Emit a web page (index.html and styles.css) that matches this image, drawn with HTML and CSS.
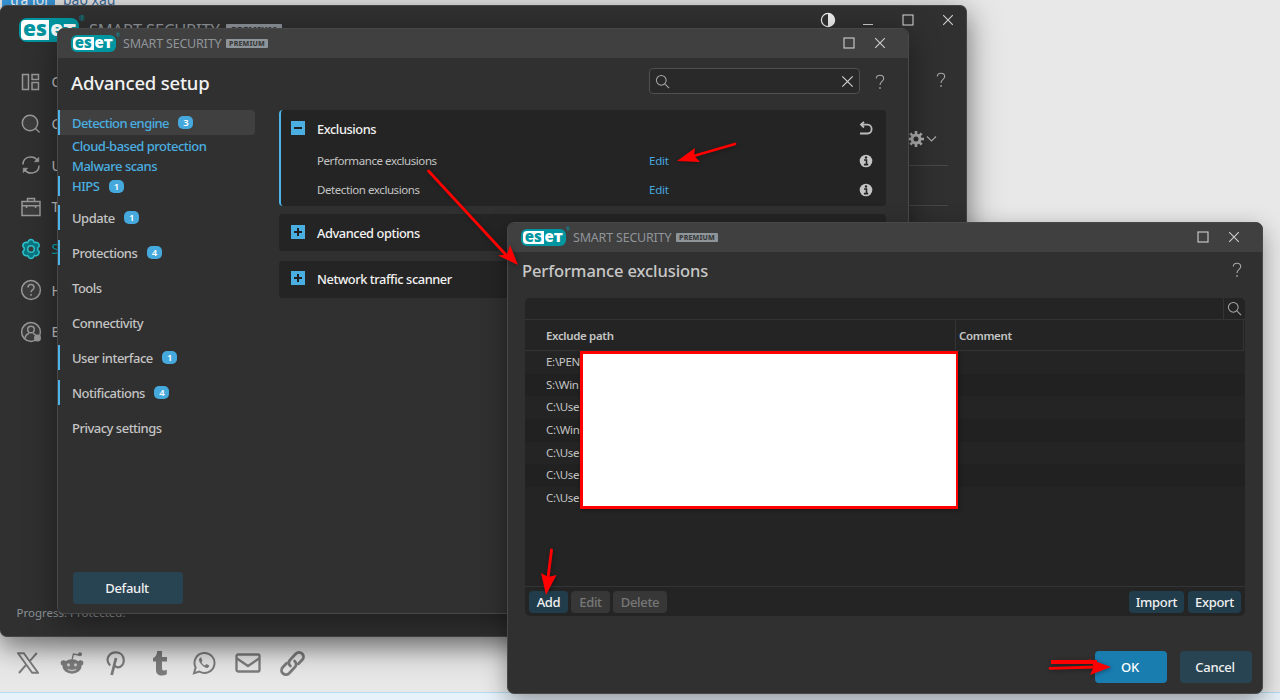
FILE: index.html
```html
<!DOCTYPE html>
<html lang="en">
<head>
<meta charset="utf-8">
<title>ESET Smart Security Premium</title>
<link rel="stylesheet" href="styles.css">
</head>
<body>
<svg class="defs" width="0" height="0">
  <symbol id="search" viewBox="0 0 16 16"><circle cx="6.7" cy="6.7" r="5.2"/><path d="M10.5 10.5 15 15"/></symbol>
  <symbol id="close" viewBox="0 0 12 12"><path d="M1.2 1.2 10.8 10.8M10.8 1.2 1.2 10.8"/></symbol>
  <symbol id="max" viewBox="0 0 12 12"><rect x="1" y="1" width="10" height="10"/></symbol>
  <symbol id="help" viewBox="0 0 10 16"><path d="M1.3 4.6C1.3 2.4 2.8 1.2 5 1.2s3.7 1.3 3.7 3.3C8.700 7.400 5 7.300 5 11"/><path d="M5 13.300v1.500" stroke-width="1.600"/></symbol>
  <symbol id="info" viewBox="0 0 14 14"><circle cx="7" cy="7" r="6.300" fill="#c4c4c4" stroke="none"/><path d="M5 6h2.500v4.500M4.900 10.600h4.300" stroke="#242424" stroke-width="1.600"/><circle cx="7" cy="3.500" r="1.200" fill="#242424" stroke="none"/></symbol>
</svg>

<div class="desktop">
  <div class="page-title"><span class="mark">tra lời</span><span class="link">báo xấu</span></div>
  <div class="share">
    <svg width="22" height="22" viewBox="0 0 22 22" fill="none" stroke="#7c7c7c"><path d="M1 1.200h5.800L21 20.800h-5.800z" stroke-width="1.900"/><path d="M19.800 1 12.500 9.300M9.300 12.700 2 21" stroke-width="2"/></svg>
    <svg width="24" height="24" viewBox="0 0 24 24" fill="#7c7c7c"><circle cx="3.500" cy="12" r="2.800"/><circle cx="20.500" cy="12" r="2.800"/><ellipse cx="12" cy="15.500" rx="9.500" ry="7.200"/><circle cx="20" cy="3.200" r="2"/><path d="M12 9l1.400-6 5.600 1" fill="none" stroke="#7c7c7c" stroke-width="1.300"/><circle cx="8.500" cy="13.800" r="1.600" fill="#ccc"/><circle cx="15.500" cy="13.800" r="1.600" fill="#ccc"/><path d="M8 18.200q4 2.600 8 0" fill="none" stroke="#ccc" stroke-width="1.300"/></svg>
    <svg width="20" height="25" viewBox="0 0 20 25" fill="none" stroke="#7c7c7c" stroke-width="2.200"><path d="M4.200 14.500C-1 9.500 2 1.300 10.300 1.300c9.500 0 9.800 15 1.600 15-2.400 0-3.200-1.800-3.200-1.800"/><path d="M10 7 5.700 24" stroke-width="2.800"/></svg>
    <svg width="16" height="26" viewBox="0 0 16 26" fill="#7c7c7c"><path d="M5.200 1H10v6h5v4.500h-5v6.700c0 3 2.500 2.700 4.800 1.500v4.600C9.500 27 4 25.500 4 20v-8.500H1V8c3-1.200 4-3.500 4.200-7z"/></svg>
    <svg width="24" height="24" viewBox="0 0 24 24" fill="none" stroke="#7c7c7c" stroke-width="2"><path d="M2 22.200 3.600 16.500A10 10 0 1 1 7.300 20.500z"/><path d="M8.500 6.500 7 8c-.8 3 5 9.200 8.500 9l1.700-1.600-.3-1.100-2.600-1.200-1.400 1.500c-1.500-.6-2.700-1.700-3.500-3.300l1.100-1.300L9.300 6.600z" fill="#7c7c7c" stroke="none"/></svg>
    <svg width="26" height="20" viewBox="0 0 26 20" fill="none" stroke="#7c7c7c" stroke-width="2.300" stroke-linejoin="round"><rect x="1.500" y="1.500" width="23" height="17" rx="1.500"/><path d="M2 5.500 13 13l11-7.500"/></svg>
    <svg width="27" height="27" viewBox="0 0 26 26" fill="none" stroke="#7c7c7c" stroke-width="2.700" stroke-linecap="round"><path d="M11 15.500c-2.400-2.400-1.800-4.500 0-6.300l5.200-5.500c4-4 10 1.500 6.200 5.700l-3.700 3.800"/><path d="M15 10.500c2.400 2.400 1.800 4.500 0 6.300l-5.200 5.500c-4 4-10-1.500-6.200-5.700l3.700-3.800"/></svg>
  </div>
  <div class="taskbar"></div>

  <section class="window main">
    <header class="main-bar">
      <div class="brand big"><span class="logo"><b>es</b><i>eт</i></span><sup>®</sup><span class="product">SMART SECURITY</span><span class="premium">PREMIUM</span></div>
      <div class="main-ctl">
        <svg width="16" height="16" viewBox="0 0 16 16"><circle cx="8" cy="8" r="6.600" fill="none" stroke="#eee" stroke-width="1.200"/><path d="M8 1.400a6.600 6.600 0 0 1 0 13.200z" fill="#eee"/></svg>
        <svg class="ico" width="12" height="12" viewBox="0 0 12 12"><path d="M1 10.500h10"/></svg>
        <svg class="ico" width="12" height="12"><use href="#max"/></svg>
        <svg class="ico" width="12" height="12"><use href="#close"/></svg>
      </div>
    </header>
    <div class="main-body">
      <nav class="side">
        <a><svg width="22" height="22" viewBox="0 0 22 22"><path d="M2.500 3.500h6v15h-6zM12 3.500h6.500v5H12zM12 11.500h6.500v7H12z"/></svg>O</a>
        <a><svg width="22" height="22" viewBox="0 0 22 22"><circle cx="10" cy="10" r="7.700"/><path d="m15.500 15.500 4 4"/></svg>C</a>
        <a><svg width="22" height="22" viewBox="0 0 22 22"><g fill="none"><path d="M3 10.500C3 2 14 .5 17.800 7M19 11.500C19 20 8 21.500 4.200 15"/></g><path d="M14.300 7.800h4.500V3.300zM7.700 14.200H3.200v4.500z" fill="#999" stroke-width=".6"/></svg>U</a>
        <a><svg width="22" height="22" viewBox="0 0 22 22"><path d="M2 5.500h18v14H2zM7.500 5.500V2.500h7v3M2 9.800h18M6.500 9v3M15.500 9v3"/></svg>T</a>
        <a class="on"><svg width="22" height="22" viewBox="0 0 22 22"><path d="M8.700 2.500q2.300-2 4.600 0l.9 2 2.200-.3q2.900.8 2.800 4L17.800 10v2l1.400 1.800q.1 3.200-2.800 4l-2.200-.3-.9 2q-2.300 2-4.600 0l-.9-2-2.200.3q-2.900-.8-2.800-4L4.200 12v-2L2.800 8.200q-.1-3.200 2.800-4l2.200.3z" fill="#0a7680"/><circle cx="11" cy="11" r="3.300"/></svg>S</a>
        <a><svg width="22" height="22" viewBox="0 0 22 22"><circle cx="11" cy="11" r="9.400"/><path d="M8 8.500c0-4 6-4 6 0 0 2.500-3 2.300-3 4.800M11 15v1.700"/></svg>H</a>
        <a><svg width="22" height="22" viewBox="0 0 22 22"><circle cx="11" cy="11" r="9.400"/><circle cx="11" cy="8.500" r="3.300"/><path d="M5 17.500c.5-3 2-4.500 4-5M17 17.500c-.5-3-2-4.500-4-5"/><circle cx="17.500" cy="17" r="3.500" fill="#999" stroke="none"/></svg>E</a>
      </nav>
      <div class="aside">
        <svg class="ico dim q" width="10" height="16"><use href="#help"/></svg>
        <div class="gear"><svg width="16" height="16" viewBox="0 0 16 16"><circle cx="8" cy="8" r="4" fill="none" stroke="#b0b0b0" stroke-width="3"/><path d="M8 0v3M8 13v3M0 8h3M13 8h3M2.300 2.300l2 2M11.700 11.700l2 2M13.700 2.300l-2 2M4.300 11.700l-2 2" stroke="#b0b0b0" stroke-width="2.600"/></svg><svg class="ico dim" width="11" height="8" viewBox="0 0 11 8"><path d="M1 1.500 5.500 6 10 1.500"/></svg></div>
        <hr><hr>
      </div>
    </div>
    <footer class="progress">Progress. Protected.</footer>
  </section>

  <section class="window setup">
    <header class="bar">
      <div class="brand"><span class="logo"><b>es</b><i>eт</i></span><sup>®</sup><span class="product">SMART SECURITY</span><span class="premium">PREMIUM</span></div>
      <div class="ctl"><svg class="ico" width="12" height="12"><use href="#max"/></svg><svg class="ico" width="12" height="12"><use href="#close"/></svg></div>
    </header>
    <div class="setup-head">
      <h1>Advanced setup</h1>
      <div class="searchbox"><svg class="ico dim" width="15" height="15"><use href="#search"/></svg><svg class="ico" width="13" height="13"><use href="#close"/></svg></div>
      <svg class="ico dim" width="10" height="16"><use href="#help"/></svg>
    </div>
    <div class="setup-body">
      <nav class="tree">
        <a class="hot sel mod">Detection engine<em>3</em></a>
        <a class="hot sub">Cloud-based protection</a>
        <a class="hot sub">Malware scans</a>
        <a class="hot sub mod">HIPS<em>1</em></a>
        <a class="mod">Update<em>1</em></a>
        <a class="mod">Protections<em>4</em></a>
        <a>Tools</a>
        <a>Connectivity</a>
        <a class="mod">User interface<em>1</em></a>
        <a class="mod">Notifications<em>4</em></a>
        <a>Privacy settings</a>
      </nav>
      <div class="panels">
        <div class="panel open">
          <div class="prow head"><svg width="14" height="14" viewBox="0 0 14 14"><path d="M0 0h14v14H0z" fill="#4aaee0"/><path d="M3 7h8" stroke="#202020" stroke-width="2"/></svg><h2>Exclusions</h2><svg class="ico undo" width="14" height="14" viewBox="0 0 14 14"><path d="M5 .8 2 3.600l3 2.900M2 3.600h6.500c5.500 0 5.500 8.900 0 8.900H1"/></svg></div>
          <div class="prow"><span>Performance exclusions</span><a>Edit</a><svg class="ico" width="14" height="14"><use href="#info"/></svg></div>
          <div class="prow"><span>Detection exclusions</span><a>Edit</a><svg class="ico" width="14" height="14"><use href="#info"/></svg></div>
        </div>
        <div class="panel shut"><svg width="14" height="14" viewBox="0 0 14 14"><path d="M0 0h14v14H0z" fill="#4aaee0"/><path d="M3 7h8M7 3v8" stroke="#202020" stroke-width="2"/></svg><h2>Advanced options</h2></div>
        <div class="panel shut"><svg width="14" height="14" viewBox="0 0 14 14"><path d="M0 0h14v14H0z" fill="#4aaee0"/><path d="M3 7h8M7 3v8" stroke="#202020" stroke-width="2"/></svg><h2>Network traffic scanner</h2></div>
      </div>
    </div>
    <button class="btn default">Default</button>
  </section>

  <section class="window excl">
    <header class="bar">
      <div class="brand"><span class="logo"><b>es</b><i>eт</i></span><sup>®</sup><span class="product">SMART SECURITY</span><span class="premium">PREMIUM</span></div>
      <div class="ctl"><svg class="ico" width="12" height="12"><use href="#max"/></svg><svg class="ico" width="12" height="12"><use href="#close"/></svg></div>
    </header>
    <div class="excl-head"><h1>Performance exclusions</h1><svg class="ico dim" width="10" height="16"><use href="#help"/></svg></div>
    <div class="table">
      <div class="filter"><span><svg class="ico dim" width="15" height="15"><use href="#search"/></svg></span></div>
      <div class="thead"><div>Exclude path</div><div>Comment</div></div>
      <div class="rows">
        <div>E:\PEN</div><div>S:\Win</div><div>C:\Use</div><div>C:\Win</div><div>C:\Use</div><div>C:\Use</div><div>C:\Use</div>
      </div>
      <div class="tools">
        <button class="tb">Add</button><button class="tb off">Edit</button><button class="tb off">Delete</button>
        <button class="tb push">Import</button><button class="tb">Export</button>
      </div>
    </div>
    <div class="actions"><button class="btn ok">OK</button><button class="btn">Cancel</button></div>
  </section>

  <div class="redaction"></div>
  <svg class="arrows" width="1280" height="700" fill="red" stroke="red">
    <g stroke-width="2.800" stroke-linecap="round">
      <path d="M735 144 690 157"/><path d="M428.500 171 507 256"/><path d="M551.500 550 547.500 582"/><path d="M1050 668.300 1096 667"/>
    </g>
    <path d="M1051 662h46" stroke-width="4"/>
    <g stroke="none">
      <path d="M677 161 695 148 694 155.500 700 162z"/>
      <path d="M518 265 498 255.500 507 254.500 510 245z"/>
      <path d="M546 595 541 573 548 577 556.500 575z"/>
      <path d="M1111 667 1089 659 1094 666.500 1090 675z"/>
    </g>
  </svg>
</div>
</body>
</html>
```

FILE: styles.css
```css
* { box-sizing: border-box; }
body { margin: 0; font-family: "Noto Sans", "Open Sans", sans-serif; font-size: 13px; color: #c4c4c4; }
h1, h2 { margin: 0; font-weight: 500; }
svg { flex: none; display: block; }
button { border: 0; padding: 0; font: 500 13px "Noto Sans", sans-serif; letter-spacing: -.3px; color: #f0f0f0; }
.defs { position: absolute; }
.desktop { position: relative; width: 1280px; height: 700px; overflow: hidden; background: #e8e8e8; display: flex; flex-direction: column; }
.page-title { display: flex; height: 642px; line-height: 14px; font-size: 14px; margin-top: -7px; }
.mark { background: #3b9ade; color: #fff; height: 14px; margin-left: 2px; width: 53px; padding-left: 8px; }
.link { color: #3f6d9c; margin-left: 8px; }
.share { flex: 1; display: grid; grid-template-columns: repeat(7, 44px); align-items: center; justify-items: center; padding: 0 0 1px 6px; justify-content: start; }
.taskbar { height: 8px; background: #e8f2fa; border-top: 1px solid #b4daf0; }

.window { position: absolute; background: #303030; border-radius: 7px; display: flex; flex-direction: column; overflow: hidden; }
.ico { fill: none; stroke: #cfcfcf; stroke-width: 1.100; }
.dim { stroke: #a8a8a8; }

.brand { display: flex; align-items: center; height: 18px; }
.logo { width: 45px; height: 17px; border-radius: 6px; background: #0096a1; padding: 2px; display: flex; font-family: "Open Sans", "Noto Sans", sans-serif; font-weight: 800; font-size: 15px; line-height: 11px; }
.logo b, .logo i { width: 21px; height: 13px; text-align: center; font-style: normal; font-weight: 800; }
.logo b { background: #fff; color: #0096a1; border-radius: 4px 0 0 4px; }
.logo i { color: #fff; }
.brand sup { font-size: 5px; width: 7px; color: #0096a1; line-height: 5px; align-self: flex-start; margin-top: -2px; }
.product { font-size: 12.500px; letter-spacing: -.2px; width: 103px; color: #90959a; white-space: nowrap; }
.premium { width: 42px; height: 9px; background: #8d949a; color: #383838; border-radius: 1px; font-size: 7px; line-height: 9px; font-weight: 800; letter-spacing: .2px; text-align: center; }
.big { height: 24px; }
.big .logo { width: 60px; height: 24px; border-radius: 8px; font-size: 21px; line-height: 17px; }
.big .logo b, .big .logo i { width: 28px; height: 20px; }
.big sup { width: 10px; font-size: 7px; }
.big .product { width: 137px; font-size: 16.500px; letter-spacing: -.2px; margin-top: -2px; }
.big .premium { width: 56px; height: 11px; font-size: 9px; line-height: 11px; margin-top: -2px; }

.main { left: 0; top: 5px; width: 967px; height: 632px; border: 1px solid #454545; border-left: 0; box-shadow: 0 10px 22px rgba(0,0,0,.3), 0 8px 38px rgba(0,0,0,.3); }
.main-bar { height: 54px; padding: 12px 12px 0 19px; display: flex; justify-content: space-between; align-items: flex-start; }
.main-ctl { display: flex; align-items: center; gap: 28px; height: 16px; margin-top: -6px; }
.main-ctl svg:first-child { margin-right: -2px; }
.main-body { flex: 1; display: flex; justify-content: space-between; }
.side { padding: 1px 0 0 19.500px; width: 70px; }
.side a { display: flex; align-items: center; gap: 10px; height: 41.700px; font-size: 14px; }
.side svg { fill: #3d3d3d; stroke: #999; stroke-width: 1.500; }
.side .on { color: #00a9b5; }
.side .on svg { stroke: #2cc3cd; }
.aside { width: 58px; padding-top: 12px; }
.aside .q { margin-left: 28px; }
.gear { display: flex; align-items: center; gap: 2px; margin-top: 42px; height: 17px; }
.aside hr { width: 40px; margin: 18px 0 22px; border: 0; border-top: 1px solid #484848; }
.aside hr + hr { margin-top: 39px; }
.progress { height: 38px; padding: 7px 0 0 16.500px; font-size: 11.500px; color: #8d9498; }

.setup { left: 57px; top: 28px; width: 852px; height: 586px; border: 1px solid #484848; box-shadow: 0 8px 32px rgba(0,0,0,.42); }
.bar { height: 29px; flex: none; background: #404040; display: flex; justify-content: space-between; align-items: center; padding: 0 22px 0 13px; }
.ctl { display: flex; gap: 19px; margin-top: -2px; }
.setup-head { height: 52px; display: flex; align-items: center; padding: 0 23px 4px 13px; flex: none; }
.setup-head h1 { font-size: 18.500px; letter-spacing: -.2px; color: #f2f2f2; flex: 1; }
.searchbox { width: 211px; height: 26px; border: 1px solid #505050; border-radius: 4px; background: #292929; display: flex; justify-content: space-between; align-items: center; padding: 0 5px; margin: -2px 15px 0 0; }
.setup-body { display: flex; flex: 1; }
.tree { width: 221px; letter-spacing: -.5px; font-weight: 500; }
.tree a { display: flex; align-items: center; height: 25px; margin-bottom: 10px; padding-left: 12px; border-left: 2px solid transparent; white-space: nowrap; }
.tree .sel { width: 197px; background: #404040; border-radius: 0 4px 4px 0; margin-bottom: 1px; letter-spacing: -.6px; }
.tree .sub { height: 20px; margin-bottom: 0; }
.tree .sub.mod { margin-bottom: 9px; }
.tree .mod { border-left-color: #4db4ea; }
.tree .hot { color: #4aaee0; }
.tree em { width: 15px; height: 13px; border-radius: 5px; background: #46a9dd; color: #fff; font-size: 9.500px; font-style: normal; font-weight: 600; line-height: 13px; letter-spacing: 0; text-align: center; margin-left: 9.500px; }
.panels { width: 607px; display: flex; flex-direction: column; }
.panel { background: #242424; border-radius: 4px; }
.open { height: 96px; border-left: 2px solid #4db4ea; margin-bottom: 8px; }
.prow { display: flex; align-items: center; height: 29px; padding: 0 13px 0 36px; font-size: 11.500px; letter-spacing: -.42px; }
.prow.head { padding-left: 10px; height: 36px; }
.prow.head h2 { padding-top: 2px; }
.prow span { width: 332px; }
.prow a { color: #46a9e0; flex: 1; letter-spacing: -.2px; }
.panel h2 { font-size: 12.800px; letter-spacing: -.42px; color: #f2f2f2; flex: 1; margin-left: 12px; }
.undo { stroke-width: 1.800; stroke: #bbb; }
.shut { height: 37px; display: flex; align-items: center; padding-left: 12px; margin-bottom: 9.500px; }
.shut svg { margin-top: -2px; }
.btn { width: 72px; height: 32px; border-radius: 4px; background: #284453; padding-right: 2px; }
.default { width: 110px; margin: 0 0 9px 15px; }

.excl { left: 507px; top: 222px; width: 756px; height: 472px; border: 1px solid #484848; box-shadow: 0 8px 24px rgba(0,0,0,.38); }
.excl-head { height: 46px; flex: none; display: flex; justify-content: space-between; padding: 6px 20px 0 14px; }
.excl-head h1 { font-size: 16.500px; letter-spacing: -.1px; line-height: 26px; color: #c8c8c8; }
.excl-head svg { margin-top: 4px; }
.table { margin: 0 17px; height: 318px; background: #242424; border-radius: 5px; display: flex; flex-direction: column; overflow: hidden; }
.filter { height: 22px; border-bottom: 1px solid #343434; display: flex; justify-content: flex-end; }
.filter span { width: 22px; border-left: 1px solid #343434; padding: 3px; }
.thead { height: 31px; display: flex; align-items: center; border-bottom: 1px solid #343434; font-size: 11.500px; font-weight: 600; letter-spacing: -.35px; margin-right: 1px; }
.thead div { width: 430px; padding-left: 21px; line-height: 31px; }
.thead div + div { width: 289px; padding-left: 3px; border-left: 1px solid #343434; border-right: 1px solid #343434; }
.rows { flex: 1; }
.rows div { height: 22.700px; line-height: 21px; font-size: 11.500px; letter-spacing: -.3px; padding-left: 21px; }
.rows div:nth-child(even) { background: #212121; }
.tools { height: 30px; border-top: 1px solid #343434; display: flex; gap: 3px; padding: 4px 4px 0; }
.tb { height: 22px; width: 39px; border-radius: 4px; background: #213d4b; }
.tb:nth-child(3) { width: 54px; }
.tb.off { background: #373737; color: #777; }
.push { margin-left: auto; width: 55px; }
.push + .tb { width: 53px; margin-left: 1px; }
.actions { display: flex; justify-content: flex-end; gap: 13px; padding: 35px 10px 0; }
.ok { background: #197db0; color: #fff; }

.redaction { position: absolute; left: 580px; top: 351px; width: 378px; height: 158px; background: #fff; border: 3px solid red; border-right-width: 2px; box-shadow: 1px 1px 4px rgba(0,0,0,.4); }
.arrows { position: absolute; left: 0; top: 0; filter: drop-shadow(1px 1px 2px rgba(0,0,0,.35)); }
```
